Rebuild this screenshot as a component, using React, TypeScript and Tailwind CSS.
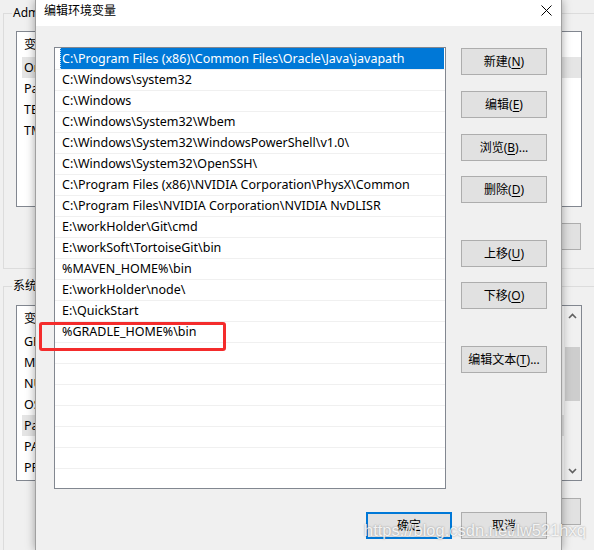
import type { ReactNode } from "react";

const paths = [
  "C:\\Program Files (x86)\\Common Files\\Oracle\\Java\\javapath",
  "C:\\Windows\\system32",
  "C:\\Windows",
  "C:\\Windows\\System32\\Wbem",
  "C:\\Windows\\System32\\WindowsPowerShell\\v1.0\\",
  "C:\\Windows\\System32\\OpenSSH\\",
  "C:\\Program Files (x86)\\NVIDIA Corporation\\PhysX\\Common",
  "C:\\Program Files\\NVIDIA Corporation\\NVIDIA NvDLISR",
  "E:\\workHolder\\Git\\cmd",
  "E:\\workSoft\\TortoiseGit\\bin",
  "%MAVEN_HOME%\\bin",
  "E:\\workHolder\\node\\",
  "E:\\QuickStart",
  "%GRADLE_HOME%\\bin",
  "", "", "", "", "", "", "",
];

const userVars = ["OneDrive", "Path", "TEMP", "TMP"];
const sysVars = ["GRADLE_HOME", "MAVEN_HOME", "NUMBER_OF_PROCESSORS", "OS", "Path", "PATHEXT", "PROCESSOR_ARCHITECTURE"];

const Btn = ({ children, primary = false, className = "" }: { children: ReactNode; primary?: boolean; className?: string }) => (
  <div
    className={
      (primary ? "border-2 border-[#0078d7] " : "border border-[#adadad] ") +
      "flex h-[27px] w-[86px] shrink-0 items-center justify-center bg-[#e1e1e1] text-[12px] leading-none text-black " +
      className
    }
  >
    {children}
  </div>
);

const Key = ({ k }: { k: string }) => (
  <>(<span className="underline decoration-1 underline-offset-[2px]">{k}</span>)</>
);

const Chevron = ({ up }: { up?: boolean }) => (
  <svg width="9" height="6" viewBox="0 0 9 6">
    <path d={up ? "M1 5 L4.5 1.5 L8 5" : "M1 1 L4.5 4.5 L8 1"} fill="none" stroke="#606060" strokeWidth="1.6" />
  </svg>
);

function BackList({ rows, selected, scroll }: { rows: string[]; selected: number; scroll?: boolean }) {
  return (
    <div className="flex h-[176px] w-[566px] border border-[#828790] bg-white">
      <div className="flex flex-1 flex-col overflow-hidden">
        <div className="h-[25px] shrink-0 pl-[7px] leading-[25px]">变量</div>
        {rows.map((r, i) => (
          <div key={i} className="h-[21px] shrink-0">
            <div
              className={
                i === selected
                  ? "ml-[5px] h-full bg-[#e5e5e5] pl-[2px] leading-[21px]"
                  : "h-full pl-[7px] leading-[21px]"
              }
            >
              {r}
            </div>
          </div>
        ))}
      </div>
      {scroll && (
        <div className="flex w-[17px] shrink-0 flex-col bg-[#f0f0f0]">
          <div className="flex h-[19px] items-center justify-center">
            <Chevron up />
          </div>
          <div className="mx-auto mt-[22px] h-[54px] w-[15px] bg-[#cdcdcd]" />
          <div className="flex-1" />
          <div className="flex h-[19px] items-center justify-center">
            <Chevron />
          </div>
        </div>
      )}
    </div>
  );
}

function BackWindow() {
  return (
    <div className="flex flex-col pl-[3px]">
      <div className="relative mt-[13px] h-[256px] w-[620px] border border-[#dcdcdc] pl-[12px] pt-[17px]">
        <span className="absolute -top-[9px] left-[8px] bg-[#f0f0f0] px-[1px] text-[12px] leading-[16px]">
          Administrator 的用户变量(U)
        </span>
        <BackList rows={userVars} selected={0} />
        <div className="mt-[16px] flex w-[565px] justify-end gap-[9px]">
          <Btn>新建(N)...</Btn>
          <Btn>编辑(E)...</Btn>
          <Btn>删除(D)</Btn>
        </div>
      </div>
      <div className="relative mt-[17px] h-[280px] w-[620px] border border-[#dcdcdc] pl-[12px] pt-[18px]">
        <span className="absolute -top-[9px] left-[8px] bg-[#f0f0f0] px-[1px] text-[12px] leading-[16px]">
          系统变量(S)
        </span>
        <BackList rows={sysVars} selected={4} scroll />
        <div className="mt-[17px] flex w-[565px] justify-end gap-[9px]">
          <Btn>新建(W)...</Btn>
          <Btn>编辑(I)...</Btn>
          <Btn>删除(L)</Btn>
        </div>
      </div>
    </div>
  );
}

function PathList() {
  return (
    <div className="flex h-[442px] w-[392px] shrink-0 flex-col overflow-hidden border border-[#828790] bg-white">
      {paths.map((p, i) =>
        i === 0 ? (
          <div key={i} className="h-[21px] shrink-0 pl-[5px] pr-[1px]">
            <div className="h-full whitespace-nowrap border-l border-dotted border-[#cfe2f7] bg-[#0078d7] pl-[1px] leading-[21px] text-white">
              {p}
            </div>
          </div>
        ) : (
          <div key={i} className="h-[21px] shrink-0 whitespace-nowrap border-t border-[#f0f0f0] pl-[7px] leading-[20px]">
            {p}
          </div>
        )
      )}
    </div>
  );
}

export default function App() {
  return (
    <div className="relative h-[550px] w-[594px] overflow-hidden bg-[#f0f0f0] font-['Noto_Sans','Noto_Sans_CJK_SC',sans-serif] text-[12.5px] text-black">
      <BackWindow />

      <div className="absolute left-[35px] top-0 flex h-[550px] w-[527px] flex-col border-x border-[#a0a0a0] bg-[#f0f0f0] shadow-[0_0_9px_rgba(0,0,0,0.35)]">
        <div className="flex h-[26px] shrink-0 items-start justify-between bg-white pl-[8px] pr-[9px] pt-[5px]">
          <span className="text-[12px] leading-[12px]">编辑环境变量</span>
          <svg width="11" height="11" viewBox="0 0 11 11">
            <path d="M0.5 0.5 L10.5 10.5 M10.5 0.5 L0.5 10.5" stroke="#000" strokeWidth="1" />
          </svg>
        </div>

        <div className="flex flex-1 flex-col pl-[18px] pt-[21px]">
          <div className="flex">
            <PathList />
            <div className="ml-[15px] flex flex-col pt-[1px]">
              <Btn>新建<Key k="N" /></Btn>
              <Btn className="mt-[16px]">编辑<Key k="E" /></Btn>
              <Btn className="mt-[16px]">浏览<Key k="B" />...</Btn>
              <Btn className="mt-[15px]">删除<Key k="D" /></Btn>
              <Btn className="mt-[37px]">上移<Key k="U" /></Btn>
              <Btn className="mt-[15px]">下移<Key k="O" /></Btn>
              <Btn className="mt-[37px]">编辑文本<Key k="T" />...</Btn>
            </div>
          </div>
          <div className="mt-[23px] flex gap-[9px] pl-[312px]">
            <Btn primary>确定</Btn>
            <Btn>取消</Btn>
          </div>
        </div>
      </div>

      <div className="absolute left-[39px] top-[322px] h-[29px] w-[187px] rounded-[3px] border-[3px] border-[#f42c2c]" />

      <div className="absolute left-[364px] top-[520px] font-['Liberation_Sans',Arial,sans-serif] text-[16.5px] leading-[20px] text-white/85 [text-shadow:0_0_2px_rgba(0,0,0,0.4)]">
        https://blog.csdn.net/lw521hxq
      </div>
    </div>
  );
}
